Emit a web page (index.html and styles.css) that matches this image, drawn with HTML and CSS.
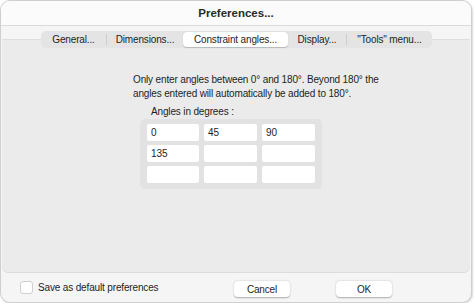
FILE: index.html
```html
<!DOCTYPE html>
<html lang="en">
<head>
    <meta charset="UTF-8">
    <title>Preferences...</title>
    <link rel="stylesheet" href="styles.css">
</head>
<body>
    <div class="window">
        <div class="titlebar">Preferences...</div>

        <div class="tabstrip">
            <div class="tabs">
                <span class="tab tab-general">General...</span>
                <span class="sep"></span>
                <span class="tab tab-dimensions">Dimensions...</span>
                <span class="tab tab-angles selected">Constraint angles...</span>
                <span class="tab tab-display">Display...</span>
                <span class="sep"></span>
                <span class="tab tab-tools">"Tools" menu...</span>
            </div>
        </div>

        <div class="panel">
            <p class="note">Only enter angles between 0° and 180°. Beyond 180° the<br>angles entered will automatically be added to 180°.</p>
            <div class="angles">
                <div class="angles-label">Angles in degrees :</div>
                <div class="angles-box">
                    <input class="angle" type="text" value="0">
                    <input class="angle" type="text" value="45">
                    <input class="angle" type="text" value="90">
                    <input class="angle" type="text" value="135">
                    <input class="angle" type="text" value="">
                    <input class="angle" type="text" value="">
                    <input class="angle" type="text" value="">
                    <input class="angle" type="text" value="">
                    <input class="angle" type="text" value="">
                </div>
            </div>
        </div>

        <div class="footer">
            <label class="check">
                <span class="box"></span>
                Save as default preferences
            </label>
            <div class="buttons">
                <button class="btn">Cancel</button>
                <button class="btn">OK</button>
            </div>
        </div>
    </div>
</body>
</html>
```

FILE: styles.css
```css
body {
    margin: 0;
    background-color: #ffffff;
    font-family: "Liberation Sans", Arial, sans-serif;
    font-size: 10px;
    letter-spacing: -0.15px;
    color: #1e1e1e;
}
.window {
    width: 470px;
    height: 301px;
    border: 1px solid #cfcfcf;
    border-radius: 10px;
    overflow: hidden;
    background-color: #f5f5f5;
    box-shadow: 1px 1px 2px rgba(0,0,0,0.15);
    display: flex;
    flex-direction: column;
}
.titlebar {
    height: 24px;
    line-height: 25px;
    text-align: center;
    font-weight: bold;
    font-size: 11.5px;
    letter-spacing: 0;
    color: #2a2a2a;
    background-color: #fbfbfb;
    border-bottom: 1px solid #dadada;
}
.tabstrip {
    padding: 5px 0 0 40px;
    display: flex;
}
.tabs {
    position: relative;
    z-index: 1;
    display: flex;
    align-items: center;
    height: 17px;
    background-color: #e4e4e4;
    border-radius: 5px;
}
.tab {
    text-align: center;
    line-height: 15px;
    white-space: nowrap;
}
.tab-general {
    width: 65px;
}
.tab-dimensions {
    width: 76px;
}
.tab-angles {
    width: 105px;
}
.tab-display {
    width: 58px;
}
.tab-tools {
    width: 85px;
}
.tab.selected {
    background-color: #ffffff;
    border-radius: 4px;
    box-shadow: 0 0.5px 1px rgba(0,0,0,0.2);
}
.sep {
    width: 1px;
    height: 11px;
    background-color: #cdcdcd;
}
.panel {
    flex: 1;
    margin: -9px 1px 0 1px;
    background-color: #ebebeb;
    border-top: 1px solid #dedede;
    border-bottom: 1px solid #dcdcdc;
    border-radius: 0 0 6px 6px;
    padding-top: 33px;
}
.note {
    margin: 0 0 0 131px;
    line-height: 14px;
}
.angles {
    margin: 5px 0 0 138px;
}
.angles-label {
    margin-left: 11px;
    line-height: 12px;
}
.angles-box {
    width: 168px;
    margin-top: 1px;
    padding: 5px 7px 6px 7px;
    background-color: #e2e2e2;
    border-radius: 5px;
    display: grid;
    grid-template-columns: 52px 53px 53px;
    column-gap: 5px;
    row-gap: 4px;
}
.angle {
    height: 17px;
    box-sizing: border-box;
    border: none;
    border-radius: 2px;
    background-color: #ffffff;
    font-family: inherit;
    font-size: 10px;
    padding: 0 0 0 4px;
    color: #1e1e1e;
    width: 100%;
}
.footer {
    height: 29px;
    display: flex;
    align-items: flex-start;
    padding: 8px 0 0 19px;
    box-sizing: border-box;
}
.check {
    display: flex;
    align-items: center;
    gap: 5px;
    width: 214px;
}
.box {
    width: 11px;
    height: 11px;
    border: 1px solid #cfcfcf;
    border-radius: 3px;
    background-color: #ffffff;
}
.buttons {
    display: flex;
    gap: 46px;
}
.btn {
    width: 56px;
    height: 16px;
    border: none;
    border-radius: 4px;
    background-color: #ffffff;
    box-shadow: 0 0.5px 1.5px rgba(0,0,0,0.3);
    font-family: inherit;
    font-size: 10px;
    letter-spacing: -0.15px;
    color: #1e1e1e;
    padding: 0;
}
```
